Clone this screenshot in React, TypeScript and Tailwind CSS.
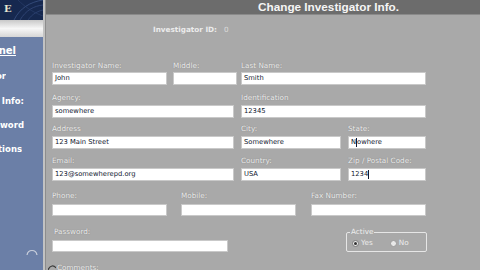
import React from "react";

const lbl = "h-[10px] leading-[10px] text-[7.25px] text-[#ededed] whitespace-nowrap [text-shadow:0_0_1px_rgba(90,90,90,0.6)]";
const inp = "bg-white border border-[#c9c9c9] text-[6.75px] text-[#101830] leading-[11px] pl-[2px] whitespace-nowrap overflow-hidden flex items-center";

function Field({ label, value, w, h = 13, gap = 2, ml = 0, cursor, labelPl = 0 }: { label: string; value?: string; w: number; h?: number; gap?: number; ml?: number; cursor?: number; labelPl?: number }) {
  return (
    <div className="flex flex-col" style={{ width: w, marginLeft: ml }}>
      <div className={lbl} style={{ paddingLeft: labelPl }}>{label}</div>
      <div className={inp} style={{ height: h, marginTop: gap }}>
        {cursor !== undefined && value ? (
          <span className="flex items-center">
            <span>{value.slice(0, cursor)}</span>
            <span className="inline-block w-[1px] h-[9px] bg-[#101830]" />
            <span>{value.slice(cursor)}</span>
          </span>
        ) : (
          value
        )}
      </div>
    </div>
  );
}

const side = "text-[8.5px] leading-[12px] font-bold text-white whitespace-nowrap";

export default function App() {
  return (
    <div className="w-[480px] h-[270px] overflow-hidden flex bg-[#a9a9a9] font-['DejaVu_Sans',sans-serif]">
      {/* Sidebar */}
      <div className="w-[43px] h-full flex flex-col bg-[#6b7fa7] shrink-0">
        <div className="h-[20px] bg-[#16284f] relative overflow-hidden">
          <svg className="absolute inset-0" width="43" height="20" viewBox="0 0 43 20">
            <path d="M14 20 C20 8 30 2 43 0" stroke="#3a5283" strokeWidth="0.8" fill="none" />
            <path d="M20 20 C26 10 34 6 43 5" stroke="#33497a" strokeWidth="0.8" fill="none" />
            <path d="M28 20 C32 14 38 11 43 10" stroke="#2e4474" strokeWidth="0.8" fill="none" />
            <path d="M18 0 C24 6 32 12 43 16" stroke="#2c416f" strokeWidth="0.6" fill="none" />
          </svg>
          <span className="absolute left-[4px] top-[1px] text-[10px] font-bold text-[#e9e6cf] font-['DejaVu_Serif',serif]">E</span>
        </div>
        <div className="h-[17px] bg-gradient-to-b from-[#c8c8c8] via-[#f7f7f7] to-[#d6d6d6]" />
        <div className="mt-[7px] w-[16px] h-[14px] flex justify-end overflow-hidden">
          <span className="text-[10px] leading-[14px] font-bold text-white underline whitespace-nowrap">Control Panel</span>
        </div>
        <div className="mt-[12px] w-[6px] h-[12px] flex justify-end overflow-hidden">
          <span className={side}>Add Investigator</span>
        </div>
        <div className="mt-[13px] w-[24px] h-[12px] flex justify-end overflow-hidden">
          <span className={side}>Change Info:</span>
        </div>
        <div className="mt-[12px] w-[24px] h-[12px] flex justify-end overflow-hidden">
          <span className={side}>Change Password</span>
        </div>
        <div className="mt-[12px] w-[22px] h-[12px] flex justify-end overflow-hidden">
          <span className={side}>Options</span>
        </div>
        <div className="mt-[92px] ml-[26px]">
          <svg width="12" height="8" viewBox="0 0 12 8">
            <path d="M1 8 C2 2 10 2 11 8" stroke="#c9cfdc" strokeWidth="1.2" fill="none" />
          </svg>
        </div>
      </div>
      {/* separator */}
      <div className="w-[3px] h-full bg-[#c2c2c2] border-r border-[#8d8d8d] shrink-0" />
      {/* Main */}
      <div className="flex-1 flex flex-col">
        <div className="h-[15px] bg-[#6c6c6c] border-b border-[#8a8a8a] flex items-center pl-[212px]">
          <span className="text-[11.75px] leading-[14px] font-bold text-[#f5f5f5] font-['Liberation_Sans',sans-serif] whitespace-nowrap">Change Investigator Info.</span>
        </div>
        <div className="mt-[10px] h-[10px] pl-[107px] flex items-center text-[7.25px] text-[#ececec] whitespace-nowrap">
          <span className="font-bold">Investigator ID:</span>
          <span className="ml-[7px] text-[#dcdcdc]">0</span>
        </div>
        <div className="pl-[6px] flex flex-col">
          <div className="mt-[26px] flex">
            <Field label="Investigator Name:" value="John" w={115} gap={1} />
            <Field label="Middle:" w={64} ml={6} gap={1} />
            <Field label="Last Name:" value="Smith" w={185} ml={4} gap={1} />
          </div>
          <div className="mt-[8px] flex">
            <Field label="Agency:" value="somewhere" w={182} />
            <Field label="Identification" value="12345" w={185} ml={7} />
          </div>
          <div className="mt-[6px] flex">
            <Field label="Address" value="123 Main Street" w={182} />
            <Field label="City:" value="Somewhere" w={100} ml={7} />
            <Field label="State:" value="Nowhere" w={78} ml={7} cursor={1} />
          </div>
          <div className="mt-[7px] flex">
            <Field label="Email:" value="123@somewherepd.org" w={182} />
            <Field label="Country:" value="USA" w={100} ml={7} />
            <Field label="Zip / Postal Code:" value="1234" w={78} ml={7} cursor={4} />
          </div>
          <div className="mt-[10px] flex">
            <Field label="Phone:" w={115} h={12} gap={3} />
            <Field label="Mobile:" w={115} ml={14} h={12} gap={3} />
            <Field label="Fax Number:" w={115} ml={15} h={12} gap={3} />
          </div>
          <div className="mt-[11px] flex">
            <Field label="Password:" w={176} h={12} gap={3} labelPl={2} />
            <div className="ml-[118px] mt-[5px] w-[81px] h-[20px] border border-[#e6e6e6] rounded-[2px] relative flex items-center text-[7.25px] text-[#ededed]">
              <span className="absolute left-[3px] top-[-6px] px-[1px] bg-[#a9a9a9] leading-[10px]">Active</span>
              <div className="ml-[5px] mt-[3px] flex items-center">
                <span className="w-[7px] h-[7px] rounded-full bg-[#e8e8e8] border border-[#7a7a7a] flex items-center justify-center">
                  <span className="w-[3px] h-[3px] rounded-full bg-[#333]" />
                </span>
                <span className="ml-[2px]">Yes</span>
              </div>
              <div className="ml-[17px] mt-[3px] flex items-center">
                <span className="w-[7px] h-[7px] rounded-full bg-[#e8e8e8] border border-[#9a9a9a]" />
                <span className="ml-[2px]">No</span>
              </div>
            </div>
          </div>
          <div className="mt-[11px] flex items-center">
            <svg width="8" height="8" viewBox="0 0 8 8" className="ml-[-4px]">
              <path d="M0 6 C2 1 6 1 8 4" stroke="#3a3a3a" strokeWidth="1.2" fill="none" />
            </svg>
            <span className={lbl + " ml-[1px]"}>Comments:</span>
          </div>
        </div>
      </div>
    </div>
  );
}
